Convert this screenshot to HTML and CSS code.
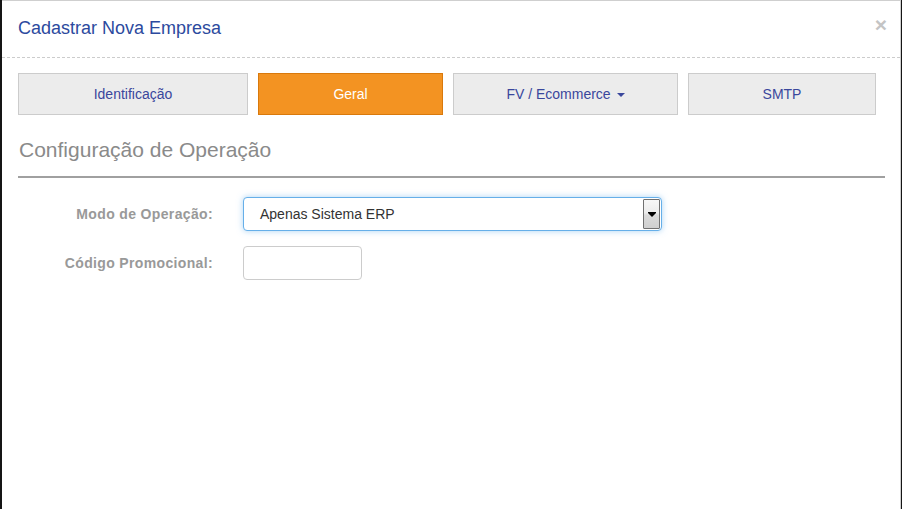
FILE: index.html
```html
<!DOCTYPE html>
<html lang="pt-BR">
<head>
<meta charset="utf-8">
<title>Cadastrar Nova Empresa</title>
<link rel="stylesheet" href="styles.css">
</head>
<body>
<div class="modal">
  <div class="modal-header">
    <h4 class="modal-title">Cadastrar Nova Empresa</h4>
    <span class="close">×</span>
  </div>
  <div class="modal-body">
    <div class="tabs">
      <div class="tab tab-ident">Identificação</div>
      <div class="tab tab-geral active">Geral</div>
      <div class="tab tab-fv">FV / Ecommerce <span class="caret"></span></div>
      <div class="tab tab-smtp">SMTP</div>
    </div>
    <h3 class="section-title">Configuração de Operação</h3>
    <div class="form">
      <div class="form-row">
        <label class="form-label">Modo de Operação:</label>
        <div class="select">
          <span class="select-text">Apenas Sistema ERP</span>
          <span class="select-btn"><span class="select-arrow"></span></span>
        </div>
      </div>
      <div class="form-row">
        <label class="form-label">Código Promocional:</label>
        <div class="input"></div>
      </div>
    </div>
  </div>
</div>
</body>
</html>
```
FILE: styles.css
```css
html, body {
  margin: 0;
  padding: 0;
  height: 100%;
  background: #151515;
}
body {
  font-family: "Liberation Sans", Arial, sans-serif;
  overflow: hidden;
}
.modal {
  margin-left: 2px;
  width: 898px;
  min-height: 100%;
  background: #fff;
  border-top: 1px solid #cfcfcf;
  border-right: 1px solid #cfcfcf;
}
.modal-header {
  display: flex;
  justify-content: space-between;
  align-items: flex-start;
  padding: 17px 16px 19px 16px;
  border-bottom: 1px dashed #cccccc;
}
.modal-title {
  margin: 0;
  font-size: 18px;
  font-weight: normal;
  line-height: 20px;
  color: #2c4a9e;
}
.close {
  font-size: 21px;
  font-weight: bold;
  line-height: 14px;
  color: #c4c4c4;
  margin-right: -3px;
}
.modal-body {
  padding: 15px 15px 0 16px;
}
.tabs {
  display: flex;
  gap: 10px;
}
.tab {
  box-sizing: border-box;
  height: 42px;
  display: flex;
  align-items: center;
  justify-content: center;
  background: #ececec;
  border: 1px solid #cccccc;
  font-size: 14px;
  color: #3a479c;
}
.tab-ident { width: 230px; }
.tab-geral { width: 185px; }
.tab-fv { width: 225px; }
.tab-smtp { width: 188px; }
.tab.active {
  background: #f39322;
  border-color: #d9790c;
  color: #fff;
}
.caret {
  display: inline-block;
  width: 0;
  height: 0;
  margin-left: 6px;
  margin-top: 2px;
  border-left: 4px solid transparent;
  border-right: 4px solid transparent;
  border-top: 4px solid #3a479c;
}
.section-title {
  margin: 23px 0 0 0;
  padding: 0 0 15px 1px;
  font-size: 21px;
  font-weight: normal;
  line-height: 23px;
  color: #8a8a8a;
  border-bottom: 2px solid #a0a0a0;
}
.form {
  margin-top: 19px;
  display: flex;
  flex-direction: column;
  gap: 15px;
}
.form-row {
  display: grid;
  grid-template-columns: 195px auto;
  column-gap: 30px;
  align-items: center;
  justify-items: start;
}
.form-label {
  justify-self: end;
  font-size: 14px;
  font-weight: bold;
  letter-spacing: 0.35px;
  color: #999999;
}
.select {
  box-sizing: border-box;
  width: 419px;
  height: 34px;
  display: flex;
  align-items: center;
  justify-content: space-between;
  padding: 0 1px 0 16px;
  border: 1px solid #66afe9;
  border-radius: 4px;
  box-shadow: 0 0 6px rgba(102, 175, 233, 0.55);
  background: #fff;
}
.select-text {
  font-size: 14px;
  color: #333;
}
.select-btn {
  box-sizing: border-box;
  width: 17px;
  height: 30px;
  display: flex;
  align-items: center;
  justify-content: center;
  border: 1px solid #707070;
  border-radius: 1px;
  background: linear-gradient(#f7f7f7 0%, #ececec 45%, #dadada 55%, #cfcfcf 100%);
}
.select-arrow {
  width: 0;
  height: 0;
  border-left: 4px solid transparent;
  border-right: 4px solid transparent;
  border-top: 4px solid #000;
  position: relative;
  top: 1px;
  box-shadow: 0 -1px 0 0 #000;
}
.input {
  box-sizing: border-box;
  width: 119px;
  height: 34px;
  border: 1px solid #cccccc;
  border-radius: 4px;
  background: #fff;
}
```
